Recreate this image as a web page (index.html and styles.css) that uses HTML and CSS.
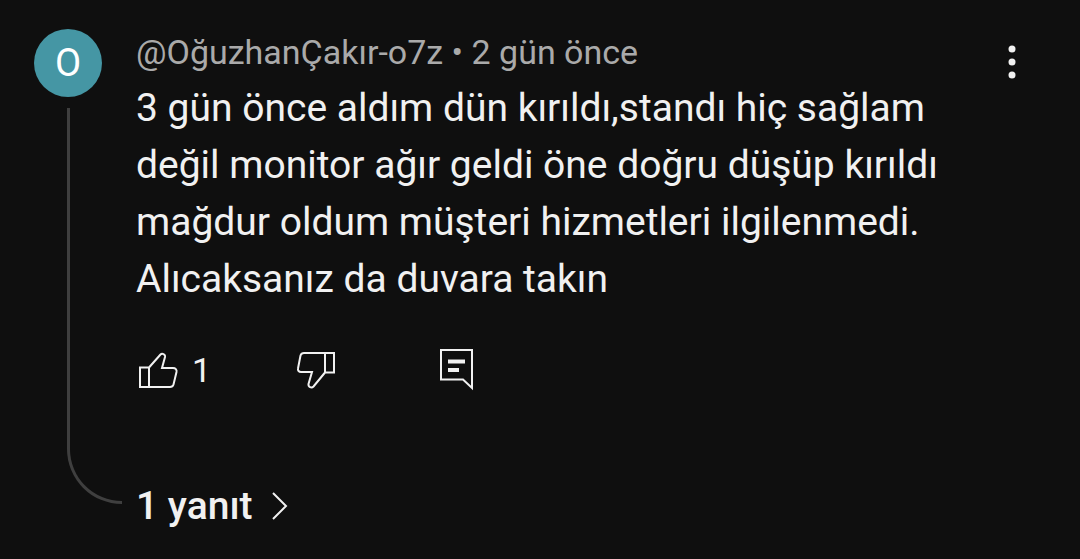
FILE: index.html
```html
<!DOCTYPE html>
<html lang="tr">
<head>
    <meta charset="UTF-8">
    <meta name="viewport" content="width=device-width, initial-scale=1.0">
    <title>Yorumlar</title>
    <link rel="stylesheet" href="styles.css">
</head>
<body>

<article class="comment">
    <div class="thread">
        <div class="avatar">O</div>
        <div class="thread-line"></div>
    </div>

    <div class="content">
        <header class="meta">@OğuzhanÇakır-o7z • 2 gün önce</header>
        <p class="text">3 gün önce aldım dün kırıldı,standı hiç sağlam<br>
            değil monitor ağır geldi öne doğru düşüp kırıldı<br>
            mağdur oldum müşteri hizmetleri ilgilenmedi.<br>
            Alıcaksanız da duvara takın</p>

        <div class="actions">
            <button class="action like" type="button" aria-label="Beğen">
                <svg width="42" height="40" viewBox="0 0 42 40">
                    <path d="M4 17.5H13V37H4ZM13 17.5L24.5 4.5C26 3 29.5 4 29 7L26 18H37C39.5 18 41 19.5 40.5 22L37.5 34.5C37 36 36 37 34 37H13"/>
                </svg>
                <span>1</span>
            </button>
            <button class="action dislike" type="button" aria-label="Beğenme">
                <svg width="42" height="40" viewBox="0 0 42 40">
                    <path d="M38 3H29V22.5H38ZM29 3H8C6 3 5 4 4.5 5.500L2 18.500C1.500 20.500 3 22 5 22H16L12.500 34C12 37 15.500 38.500 17.500 36.500L29 22.500"/>
                </svg>
            </button>
            <button class="action reply" type="button" aria-label="Yanıtla">
                <svg width="38" height="44" viewBox="0 0 38 44">
                    <path d="M4 2H35V40L26 31.500H4Z"/>
                    <path class="lines" d="M11 13.500H28M11 22H22"/>
                </svg>
            </button>
        </div>

        <button class="replies" type="button">
            <span>1 yanıt</span>
            <svg width="18" height="30" viewBox="0 0 18 30">
                <path d="M2 2L15 15L2 28"/>
            </svg>
        </button>
    </div>

    <button class="menu" type="button" aria-label="Diğer işlemler">
        <svg width="8" height="34" viewBox="0 0 8 34">
            <circle cx="4" cy="4" r="3.500"/>
            <circle cx="4" cy="17" r="3.500"/>
            <circle cx="4" cy="30" r="3.500"/>
        </svg>
    </button>
</article>

</body>
</html>
```
FILE: styles.css
```css
body {
    margin: 0;
    background-color: #0f0f0f;
    color: #f1f1f1;
    font-family: Roboto, sans-serif;
}
button {
    padding: 0;
    border: none;
    background: none;
    color: inherit;
    font-family: inherit;
    cursor: pointer;
}
svg {
    display: block;
    fill: none;
    stroke: #f1f1f1;
    stroke-width: 2;
}
.comment {
    display: flex;
    padding: 29px 64px 29px 34px;
}
.thread {
    flex: none;
    display: flex;
    flex-direction: column;
    width: 102px;
}
.avatar {
    display: flex;
    align-items: center;
    justify-content: center;
    width: 68px;
    height: 68px;
    border-radius: 50%;
    background-color: #4596a4;
    color: #ffffff;
    font-size: 38px;
}
.thread-line {
    flex: 1;
    margin: 11px 14px 26px 33px;
    border-left: 3px solid #3f3f3f;
    border-bottom: 3px solid #3f3f3f;
    border-bottom-left-radius: 55px;
}
.content {
    flex: 1;
    min-width: 0;
    padding-top: 3px;
}
.meta {
    color: #aaaaaa;
    font-size: 34px;
    line-height: 40px;
}
.text {
    margin: 8px 0 0;
    font-size: 39px;
    line-height: 57px;
}
.actions {
    display: flex;
    align-items: center;
    margin-top: 38px;
}
.action {
    display: flex;
    align-items: center;
    font-size: 34px;
    line-height: 48px;
}
.like {
    gap: 14px;
    width: 160px;
}
.dislike {
    width: 141px;
}
.lines {
    stroke-width: 4;
}
.replies {
    display: flex;
    align-items: center;
    gap: 18px;
    margin-top: 88px;
    font-size: 39px;
    font-weight: 500;
    line-height: 48px;
}
.menu {
    flex: none;
    align-self: flex-start;
    margin-top: 16px;
}
.menu svg {
    fill: #f1f1f1;
    stroke: none;
}
```
